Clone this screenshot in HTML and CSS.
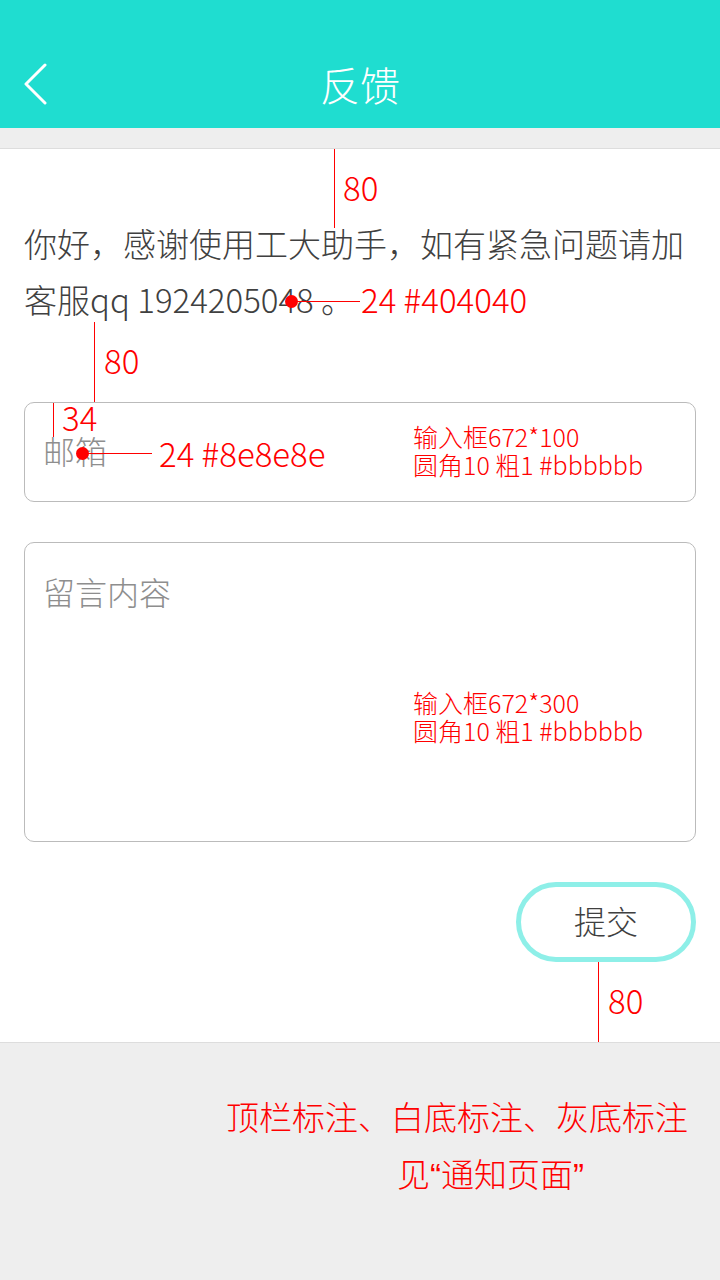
FILE: index.html
```html
<!DOCTYPE html>
<html lang="zh-CN">
<head>
<meta charset="utf-8">
<title>反馈</title>
<link rel="stylesheet" href="styles.css">
</head>
<body>
<header class="header">
  <div class="nav">
    <div class="back">
      <svg width="24" height="42" viewBox="0 0 24 42"><polyline points="21,2 2,21 21,40" fill="none" stroke="#ffffff" stroke-width="3" stroke-linecap="round" stroke-linejoin="round"/></svg>
    </div>
    <h1 class="title">反馈</h1>
    <div class="spacer"></div>
  </div>
</header>
<div class="strip"></div>
<main class="content">
  <p class="intro">你好，感谢使用工大助手，如有紧急问题请加客服qq 1924205048 。</p>
  <div class="field field-email"><span class="placeholder">邮箱</span></div>
  <div class="field field-message"><span class="placeholder">留言内容</span></div>
  <div class="actions"><button class="submit">提交</button></div>
</main>
<footer class="footer">
  <p class="note note-1">顶栏标注、白底标注、灰底标注</p>
  <p class="note note-2">见<span class="q">“</span>通知页面<span class="q">”</span></p>
</footer>

<div class="marks">
  <div class="vline v1"></div><span class="lbl l-80a">80</span>
  <div class="dot d1"></div><div class="hline h1"></div><span class="lbl l-text">24 #404040</span>
  <div class="vline v2"></div><span class="lbl l-80b">80</span>
  <div class="vline v3"></div><span class="lbl l-34">34</span>
  <div class="dot d2"></div><div class="hline h2"></div><span class="lbl l-ph">24 #8e8e8e</span>
  <div class="spec s1">输入框672*100<br>圆角10 粗1 #bbbbbb</div>
  <div class="spec s2">输入框672*300<br>圆角10 粗1 #bbbbbb</div>
  <div class="vline v4"></div><span class="lbl l-80c">80</span>
</div>
</body>
</html>
```

FILE: styles.css
```css
* { box-sizing: border-box; }
html, body { margin: 0; padding: 0; }
body {
  width: 720px;
  height: 1280px;
  position: relative;
  overflow: hidden;
  background: #eeeeee;
  font-family: "Noto Sans CJK SC", "Noto Sans", sans-serif;
  font-weight: 300;
}

.header {
  height: 128px;
  padding-top: 40px;
  background: #1fddd0;
}
.nav {
  height: 88px;
  display: grid;
  grid-template-columns: 100px 1fr 100px;
  align-items: center;
}
.back {
  padding-left: 24px;
  display: flex;
  align-items: center;
  height: 88px;
}
.back svg { display: block; }
.title {
  margin: 0;
  text-align: center;
  color: #ffffff;
  font-size: 40px;
  font-weight: 300;
  line-height: 84px;
}

.strip {
  height: 21px;
  background: #eeeeee;
  border-bottom: 1px solid #dddddd;
}

.content {
  background: #ffffff;
  padding: 66px 24px 80px;
  display: flex;
  flex-direction: column;
}
.intro {
  margin: 0 0 2px;
  font-size: 33px;
  line-height: 56px;
  color: #404040;
}
.field {
  width: 672px;
  border: 1px solid #bbbbbb;
  border-radius: 10px;
  padding: 0 18px;
}
.placeholder {
  font-size: 32px;
  color: #8e8e8e;
}
.field-email {
  margin-top: 73px;
  height: 100px;
  display: flex;
  align-items: center;
  padding-bottom: 4px;
}
.field-message {
  margin-top: 40px;
  height: 300px;
  padding-top: 27px;
  line-height: 42px;
}
.actions {
  margin-top: 40px;
  display: flex;
  justify-content: flex-end;
}
.submit {
  width: 180px;
  height: 80px;
  border: 5px solid #8eefe8;
  border-radius: 40px;
  background: #ffffff;
  color: #404040;
  font-family: inherit;
  font-weight: 300;
  font-size: 32px;
  padding: 0 0 4px;
}

.footer {
  height: 238px;
  border-top: 1px solid #dddddd;
  background: #eeeeee;
  padding-top: 45px;
}
.note {
  margin: 0;
  color: #ff0000;
  font-size: 33px;
  line-height: 57px;
}
.note-1 { padding-left: 226px; }
.note-2 { padding-left: 397px; }
.q { font-family: "Liberation Sans", sans-serif; font-weight: 400; }

/* annotation overlay */
.marks .vline, .marks .hline, .marks .dot, .marks .lbl, .marks .spec {
  position: absolute;
}
.vline { width: 1px; background: #ff0000; }
.hline { height: 1px; background: #ff0000; }
.dot { width: 13px; height: 13px; border-radius: 50%; background: #ff0000; }
.lbl {
  color: #ff0000;
  font-size: 33px;
  line-height: 40px;
  white-space: nowrap;
}
.spec {
  color: #ff0000;
  font-size: 25px;
  line-height: 28px;
  white-space: nowrap;
}

.v1 { left: 334px; top: 149px; height: 79px; }
.l-80a { left: 343px; top: 167px; }
.d1 { left: 285px; top: 295px; }
.h1 { left: 291px; top: 301px; width: 69px; }
.l-text { left: 361px; top: 279px; }
.v2 { left: 94px; top: 322px; height: 80px; }
.l-80b { left: 104px; top: 340px; }
.v3 { left: 53px; top: 403px; height: 34px; }
.l-34 { left: 62px; top: 397px; }
.d2 { left: 76px; top: 447px; }
.h2 { left: 82px; top: 453px; width: 70px; }
.l-ph { left: 159px; top: 433px; }
.s1 { left: 413px; top: 422px; }
.s2 { left: 413px; top: 688px; }
.v4 { left: 598px; top: 962px; height: 80px; }
.l-80c { left: 608px; top: 980px; }
```
